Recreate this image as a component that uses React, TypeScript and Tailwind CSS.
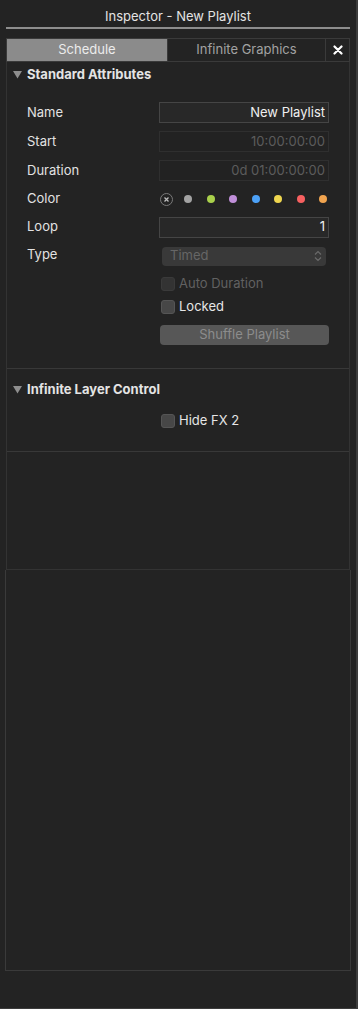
import React from "react";

const font = { fontFamily: "Inter, 'Liberation Sans', sans-serif" };

function Row({ label, h, children }: { label: string; h: string; children?: React.ReactNode }) {
  return (
    <div className={`flex items-center ${h}`}>
      <span className="w-[152px] pl-[20px] text-[13px] text-[#e2e2e2]">{label}</span>
      <div className="flex-1 pr-[20px]">{children}</div>
    </div>
  );
}

function Field({ value, dim }: { value: string; dim?: boolean }) {
  return (
    <div
      className={`h-[21px] flex items-center justify-end px-[3px] text-[13px] border ${
        dim
          ? "border-[#2f2f2f] bg-[#222222] text-[#5c5c5c]"
          : "border-[#454545] bg-[#282828] text-[#f0f0f0]"
      }`}
    >
      {value}
    </div>
  );
}

function Check({ label, dim }: { label: string; dim?: boolean }) {
  return (
    <div className="flex items-center h-[20px] gap-[4px] pl-[154px]">
      <span
        className={`w-[14px] h-[14px] rounded-[3px] border ${
          dim ? "bg-[#333333] border-[#3a3a3a]" : "bg-[#474747] border-[#555555]"
        }`}
      />
      <span className={`text-[13px] ${dim ? "text-[#616161]" : "text-[#e6e6e6]"}`}>{label}</span>
    </div>
  );
}

function Section({ title }: { title: string }) {
  return (
    <div className="flex items-center h-[25px] pl-[6px] gap-[5px]">
      <svg width="9" height="8" viewBox="0 0 9 8">
        <path d="M0 0 L9 0 L4.5 7.5 Z" fill="#8e8e8e" />
      </svg>
      <span className="text-[13px] font-bold text-[#e4e4e4]">{title}</span>
    </div>
  );
}

const dots = ["#a3a3a3", "#a9d04b", "#c08fd9", "#4ca1f7", "#efd64f", "#f76060", "#f1a44f"];

export default function App() {
  return (
    <div
      style={font}
      className="relative w-[358px] h-[1009px] bg-[#232323] border-r-2 border-b border-[#3c3c3c] flex flex-col"
    >
      <div className="h-[27px] flex items-end justify-center pb-[1px] text-[13px] text-[#e4e4e4]">
        Inspector - New Playlist
      </div>
      <div className="mx-[6px] h-[2px] bg-[#8d8d8d]" />

      <div className="mt-[9px] mx-[6px] h-[24px] flex border border-[#3a3a3a] text-[13px]">
        <div className="w-[160px] bg-[#8b8b8b] flex items-center justify-center text-[#ececec]">
          Schedule
        </div>
        <div className="flex-1 border-l border-[#3a3a3a] flex items-center justify-center text-[#a2a2a2]">
          Infinite Graphics
        </div>
        <div className="w-[24px] border-l border-[#3a3a3a] flex items-center justify-center">
          <svg width="10" height="10" viewBox="0 0 10 10">
            <path d="M1.5 1.5 L8.5 8.5 M8.5 1.5 L1.5 8.5" stroke="#ffffff" strokeWidth="2.2" strokeLinecap="round" />
          </svg>
        </div>
      </div>

      <div className="mx-[6px] h-[508px] border-x border-b border-[#333333] flex flex-col">
        <Section title="Standard Attributes" />
        <div className="pt-[11px] flex flex-col">
          <Row label="Name" h="h-[29px]">
            <Field value="New Playlist" />
          </Row>
          <Row label="Start" h="h-[29px]">
            <Field value="10:00:00:00" dim />
          </Row>
          <Row label="Duration" h="h-[29px]">
            <Field value="0d 01:00:00:00" dim />
          </Row>
          <div className="flex items-center h-[28px]">
            <span className="w-[152px] pl-[20px] text-[13px] text-[#e2e2e2]">Color</span>
            <div className="flex items-center gap-[14.5px] pl-[1px]">
              <span className="mr-[-3.5px] w-[13px] h-[13px] rounded-full border border-[#7a7a7a] flex items-center justify-center">
                <svg width="5" height="5" viewBox="0 0 5 5">
                  <path d="M0.5 0.5 L4.5 4.5 M4.5 0.5 L0.5 4.5" stroke="#bdbdbd" strokeWidth="1.3" />
                </svg>
              </span>
              {dots.map((c) => (
                <span key={c} className="w-[8px] h-[8px] rounded-full" style={{ backgroundColor: c }} />
              ))}
            </div>
          </div>
          <Row label="Loop" h="h-[28px]">
            <Field value="1" />
          </Row>
          <Row label="Type" h="h-[28px]">
            <div className="mx-[3px] mt-[2px] h-[19px] rounded-[4px] bg-[#393939] flex items-center justify-between pl-[8px] pr-[4px] text-[13px] text-[#666666]">
              <span>Timed</span>
              <svg width="8" height="12" viewBox="0 0 8 12">
                <path d="M1 4.5 L4 1.5 L7 4.5 M1 7.5 L4 10.5 L7 7.5" stroke="#6a6a6a" strokeWidth="1.2" fill="none" />
              </svg>
            </div>
          </Row>
          <div className="mt-[5px] flex flex-col gap-[3px]">
            <Check label="Auto Duration" dim />
            <Check label="Locked" />
          </div>
          <div className="mt-[8px] ml-[153px] mr-[20px] h-[20px] rounded-[4px] bg-[#575757] flex items-center justify-center text-[13px] text-[#8c8c8c]">
            Shuffle Playlist
          </div>
        </div>
        <div className="mt-[23px] border-t border-[#383838]" />
        <div className="pt-[8px]">
          <Section title="Infinite Layer Control" />
        </div>
        <div className="pt-[9px] pb-[20px]">
          <Check label="Hide FX 2" />
        </div>
        <div className="border-t border-[#383838]" />
      </div>

      <div className="mx-[5px] w-[346px] h-[401px] border-x border-b border-[#3a3a3a]" />
    </div>
  );
}
